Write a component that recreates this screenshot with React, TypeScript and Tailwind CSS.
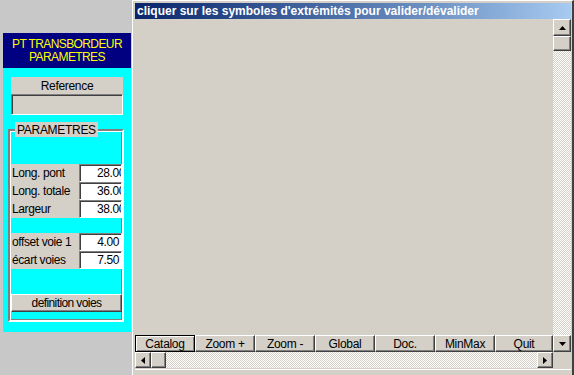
import React from 'react'

const sunken = 'border-t border-l border-t-[#808080] border-l-[#808080] border-b border-r border-b-white border-r-white shadow-[inset_1px_1px_0_#404040]'
const raised = 'border-t border-l border-t-white border-l-white border-b border-r border-b-[#404040] border-r-[#404040] shadow-[inset_-1px_-1px_0_#808080]'
const dotted = 'bg-[repeating-conic-gradient(#d4d0c8_0%_25%,#ffffff_0%_50%)] bg-[length:2px_2px]'

function Field({ label, value, clip }: { label: string; value: string; clip?: boolean }) {
  return (
    <div className="flex h-[18px] items-center">
      <span className="w-[68px] pl-[1px] leading-none">{label}</span>
      <div className={`flex h-[18px] w-[43px] items-center justify-end overflow-hidden bg-white text-[12px] ${sunken}`}>
        <span className={clip ? 'mr-[-4px]' : 'mr-[2px]'}>{value}</span>
      </div>
    </div>
  )
}

function Arrow({ dir }: { dir: 'up' | 'down' | 'left' | 'right' }) {
  const pts = {
    up: '0,4 7,4 3.5,0',
    down: '0,0 7,0 3.5,4',
    left: '4,0 4,7 0,3.5',
    right: '0,0 0,7 4,3.5',
  }[dir]
  const vertical = dir === 'up' || dir === 'down'
  return (
    <svg width={vertical ? 7 : 4} height={vertical ? 4 : 7} viewBox={vertical ? '0 0 7 4' : '0 0 4 7'}>
      <polygon points={pts} fill="#000" />
    </svg>
  )
}

const tools = ['Catalog', 'Zoom +', 'Zoom -', 'Global', 'Doc.', 'MinMax', 'Quit']

export default function App() {
  return (
    <div className="flex h-[375px] w-[574px] overflow-hidden bg-[#c8c8c8] font-['Liberation_Sans',Arial,sans-serif] text-[11px] text-black">
      {/* left parameter panel */}
      <div className="w-[132px] pl-[3px] pt-[33px]">
        <div className="w-[128px]">
          <div className="flex h-[35px] flex-col items-center justify-center bg-[#000080] text-[12px] leading-[13px] tracking-[-0.6px] text-[#ffff00]">
            <span>PT TRANSBORDEUR</span>
            <span>PARAMETRES</span>
          </div>
          <div className="h-[264px] bg-[#00ffff] px-[8px] pt-[9px]">
            <div className="flex h-[17px] items-center justify-center bg-[#d4d0c8] text-[12px] tracking-[-0.3px]">Reference</div>
            <div className={`h-[21px] bg-[#d4d0c8] ${sunken}`} />

            <div className="relative ml-[-3px] mr-[-1px] mt-[14px] h-[193px] border-2 border-t-[#808080] border-l-[#808080] border-b-white border-r-white shadow-[inset_1px_1px_0_#ffffff,inset_-1px_-1px_0_#808080]">
              <div className="absolute left-[5px] top-[-9px] flex h-[15px] items-center bg-[#d4d0c8] px-[2px] text-[12px] tracking-[-0.3px]">PARAMETRES</div>
              <div className="ml-[1px] mt-[33px] bg-[#d4d0c8] text-[12px] tracking-[-0.4px]">
                <Field label="Long. pont" value="28.00" clip />
                <Field label="Long. totale" value="36.00" clip />
                <Field label="Largeur" value="38.00" clip />
              </div>
              <div className="ml-[1px] mt-[15px] bg-[#d4d0c8] text-[12px] tracking-[-0.4px]">
                <Field label="offset voie 1" value="4.00" />
                <Field label="écart voies" value="7.50" />
              </div>
              <div className={`ml-[1px] mt-[25px] flex h-[18px] items-center justify-center bg-[#d4d0c8] text-[12px] tracking-[-0.6px] ${raised}`}>
                definition voies
              </div>
            </div>
          </div>
        </div>
      </div>

      {/* main window */}
      <div className="flex h-[375px] w-[442px] flex-col border-l border-t border-l-white border-t-white border-r-2 border-r-[#404040] bg-[#d4d0c8] pl-[2px] pr-[1px] pt-[2px]">
        <div className="flex h-[16px] items-center bg-gradient-to-r from-[#0a246a] to-[#a6caf0] pl-[2px] text-[12px] font-bold text-white">
          cliquer sur les symboles d'extrémités pour valider/dévalider
        </div>
        <div className="flex">
          <div className="flex w-[418px] flex-col">
            <div className="h-[316px] bg-[#d4d0c8]" />
            <div className="flex h-[17px] text-[12px] tracking-[-0.3px]">
              {tools.map((t, i) => (
                <div
                  key={t}
                  className={`flex h-[17px] items-center justify-center bg-[#d4d0c8] ${i === tools.length - 1 ? 'flex-1' : 'w-[60px]'} ${
                    i === 0 ? 'border border-black shadow-[inset_1px_1px_0_#ffffff,inset_-1px_-1px_0_#808080]' : raised
                  }`}
                >
                  {t}
                </div>
              ))}
            </div>
            <div className={`flex h-[16px] ${dotted}`}>
              <div className={`flex w-[16px] items-center justify-center bg-[#d4d0c8] ${raised}`}>
                <Arrow dir="left" />
              </div>
              <div className={`w-[15px] bg-[#d4d0c8] ${raised}`} />
              <div className="flex-1" />
              <div className={`flex w-[16px] items-center justify-center bg-[#d4d0c8] ${raised}`}>
                <Arrow dir="right" />
              </div>
            </div>
          </div>
          <div className="flex w-[18px] flex-col">
            <div className={`flex h-[333px] flex-col ${dotted}`}>
              <div className={`flex h-[17px] items-center justify-center bg-[#d4d0c8] ${raised}`}>
                <Arrow dir="up" />
              </div>
              <div className={`h-[15px] bg-[#d4d0c8] ${raised}`} />
              <div className="flex-1" />
              <div className={`flex h-[17px] items-center justify-center bg-[#d4d0c8] ${raised}`}>
                <Arrow dir="down" />
              </div>
            </div>
            <div className="h-[16px] bg-[#d4d0c8]" />
          </div>
        </div>
        <div className="mt-[1px] h-[1px] bg-white" />
      </div>
    </div>
  )
}
